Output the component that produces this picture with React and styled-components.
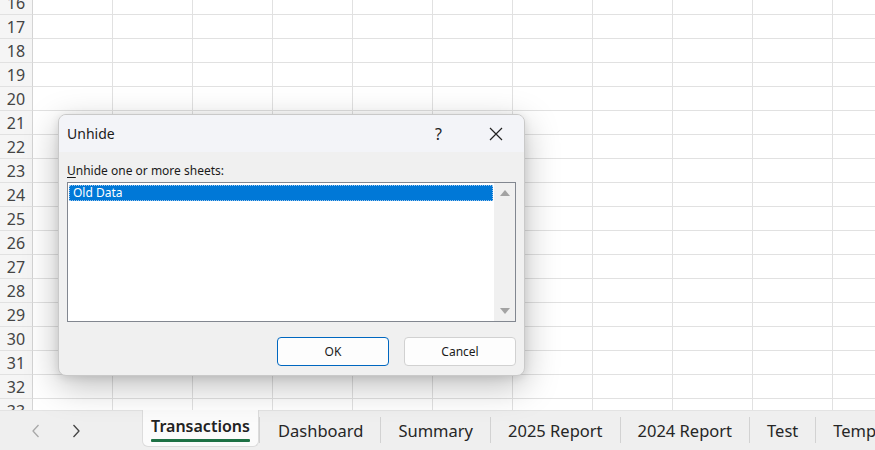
import React from 'react'
import styled, { createGlobalStyle } from 'styled-components'

const GlobalStyle = createGlobalStyle`
  html, body {
    margin: 0;
    padding: 0;
    background: #fff;
  }
  body {
    font-family: "Noto Sans", "Liberation Sans", sans-serif;
    color: #1a1a1a;
  }
`

const Window = styled.div`
  position: relative;
  width: 875px;
  height: 450px;
  overflow: hidden;
  display: flex;
  flex-direction: column;
  background: #fff;
`

const Sheet = styled.div`
  height: 410px;
  flex-shrink: 0;
  overflow: hidden;
`

const Grid = styled.div`
  margin-top: -9px;
  display: flex;
  flex-direction: column;
`

const Row = styled.div`
  display: flex;
  height: 24px;
  flex-shrink: 0;
`

const RowHead = styled.div`
  width: 33px;
  flex-shrink: 0;
  box-sizing: border-box;
  background: #f5f5f5;
  border-right: 1px solid #d4d4d4;
  border-bottom: 1px solid #e1e1e1;
  display: flex;
  align-items: center;
  justify-content: center;
  font-size: 16px;
  color: #444;
  padding-top: 1px;
`

const Cell = styled.div`
  width: 80px;
  flex-shrink: 0;
  box-sizing: border-box;
  border-right: 1px solid #e1e1e1;
  border-bottom: 1px solid #e1e1e1;
`

/* dialog */

const Dialog = styled.div`
  position: absolute;
  left: 58px;
  top: 114px;
  width: 467px;
  height: 262px;
  box-sizing: border-box;
  border: 1px solid #c9c9c9;
  border-radius: 8px;
  background: #f0f0f0;
  box-shadow: 0 10px 34px rgba(0, 0, 0, 0.26), 0 2px 8px rgba(0, 0, 0, 0.1);
  display: flex;
  flex-direction: column;
  overflow: hidden;
`

const TitleBar = styled.div`
  height: 37px;
  display: flex;
  align-items: center;
  background: #f3f4f8;
  padding-left: 8px;
`

const Title = styled.div`
  flex: 1;
  font-size: 14px;
  color: #1b1b1b;
`

const TitleButton = styled.div`
  width: 57px;
  height: 37px;
  display: flex;
  align-items: center;
  justify-content: center;
  font-size: 16px;
  color: #222;
`

const Body = styled.div`
  flex: 1;
  display: flex;
  flex-direction: column;
  padding: 11px 8px 9px 8px;
`

const Label = styled.div`
  font-size: 12px;
  color: #1a1a1a;
  height: 19px;
  line-height: 16px;

  u {
    text-decoration-thickness: 1px;
    text-underline-offset: 2px;
  }
`

const ListBox = styled.div`
  height: 140px;
  box-sizing: border-box;
  border: 1px solid #828790;
  background: #fff;
  display: flex;
`

const Items = styled.div`
  flex: 1;
  padding: 2px 1px;
`

const Item = styled.div`
  height: 16px;
  box-sizing: border-box;
  font-size: 12px;
  line-height: 14px;
  padding-left: 3px;
  background: ${p => (p.$selected ? '#0078d7' : 'transparent')};
  color: ${p => (p.$selected ? '#fff' : '#1a1a1a')};
  border: 1px dotted ${p => (p.$selected ? '#9fc6ec' : 'transparent')};
`

const ScrollBar = styled.div`
  width: 21px;
  background: #f0f0f0;
  display: flex;
  flex-direction: column;
  justify-content: space-between;
  align-items: center;
  padding: 7px 0;
`

const Arrow = styled.div`
  width: 0;
  height: 0;
  border-left: 5px solid transparent;
  border-right: 5px solid transparent;
  ${p =>
    p.$down
      ? 'border-top: 6px solid #a3a3a3;'
      : 'border-bottom: 6px solid #a3a3a3;'}
`

const Buttons = styled.div`
  margin-top: 15px;
  display: flex;
  justify-content: flex-end;
  gap: 15px;
`

const Button = styled.div`
  width: 112px;
  height: 29px;
  box-sizing: border-box;
  border-radius: 4px;
  background: #fdfdfd;
  border: 1px solid ${p => (p.$primary ? '#0067c0' : '#d1d1d1')};
  display: flex;
  align-items: center;
  justify-content: center;
  font-size: 12px;
  color: #1a1a1a;
`

/* sheet tabs */

const TabBar = styled.div`
  height: 40px;
  flex-shrink: 0;
  background: #efefef;
  border-top: 1px solid #e3e3e3;
  box-sizing: border-box;
  display: flex;
  align-items: flex-start;
`

const Nav = styled.div`
  width: 142px;
  flex-shrink: 0;
  height: 100%;
  display: flex;
  align-items: center;
  padding-left: 28px;
  gap: 24px;
  box-sizing: border-box;
`

const NavArrow = styled.div`
  width: 16px;
  display: flex;
  justify-content: center;
  color: ${p => (p.$dim ? '#a8a8a8' : '#444')};
`

const ActiveTab = styled.div`
  width: 117px;
  flex-shrink: 0;
  height: 37px;
  margin-top: -1px;
  box-sizing: border-box;
  background: #fbfbfb;
  border: 1px solid #dcdcdc;
  border-top: none;
  border-radius: 0 0 6px 6px;
  display: flex;
  flex-direction: column;
  align-items: center;
  padding-top: 5px;
  font-size: 16px;
  font-weight: 600;
  color: #222;
`

const Underline = styled.div`
  width: 99px;
  height: 3px;
  background: #1e7145;
  margin-top: 2px;
  border-radius: 1px;
`

const Tabs = styled.div`
  display: flex;
  align-items: center;
  padding-left: 1px;
  border-left: 1px solid #d2d2d2;
  height: 26px;
  margin-top: 6px;
`

const Tab = styled.div`
  height: 26px;
  flex-shrink: 0;
  display: flex;
  align-items: center;
  padding: 0 17px;
  font-size: 16.5px;
  color: #262626;
  white-space: nowrap;
  border-left: ${p => (p.$sep ? '1px solid #d2d2d2' : 'none')};
  box-sizing: border-box;
`

const rows = Array.from({ length: 18 }, (_, i) => 16 + i)
const cols = Array.from({ length: 11 })
const sheets = ['Dashboard', 'Summary', '2025 Report', '2024 Report', 'Test', 'Temp']

const Chevron = ({ left }) => (
  <svg width="10" height="16" viewBox="0 0 10 16" fill="none">
    <path
      d={left ? 'M7.5 2 L2 8 L7.5 14' : 'M2.5 2 L8 8 L2.5 14'}
      stroke="currentColor"
      strokeWidth="1.3"
      strokeLinejoin="round"
    />
  </svg>
)

const CloseIcon = () => (
  <svg width="14" height="14" viewBox="0 0 14 14">
    <path d="M1 1 L13 13 M13 1 L1 13" stroke="#222" strokeWidth="1.2" />
  </svg>
)

export default function App() {
  return (
    <>
      <GlobalStyle />
      <Window>
        <Sheet>
          <Grid>
            {rows.map(n => (
              <Row key={n}>
                <RowHead>{n}</RowHead>
                {cols.map((_, i) => (
                  <Cell key={i} />
                ))}
              </Row>
            ))}
          </Grid>
        </Sheet>

        <TabBar>
          <Nav>
            <NavArrow $dim>
              <Chevron left />
            </NavArrow>
            <NavArrow>
              <Chevron />
            </NavArrow>
          </Nav>
          <ActiveTab>
            Transactions
            <Underline />
          </ActiveTab>
          <Tabs>
            {sheets.map((s, i) => (
              <Tab key={s} $sep={i > 0}>
                {s}
              </Tab>
            ))}
          </Tabs>
        </TabBar>

        <Dialog>
          <TitleBar>
            <Title>Unhide</Title>
            <TitleButton>?</TitleButton>
            <TitleButton>
              <CloseIcon />
            </TitleButton>
          </TitleBar>
          <Body>
            <Label>
              <u>U</u>nhide one or more sheets:
            </Label>
            <ListBox>
              <Items>
                <Item $selected>Old Data</Item>
              </Items>
              <ScrollBar>
                <Arrow />
                <Arrow $down />
              </ScrollBar>
            </ListBox>
            <Buttons>
              <Button $primary>OK</Button>
              <Button>Cancel</Button>
            </Buttons>
          </Body>
        </Dialog>
      </Window>
    </>
  )
}
